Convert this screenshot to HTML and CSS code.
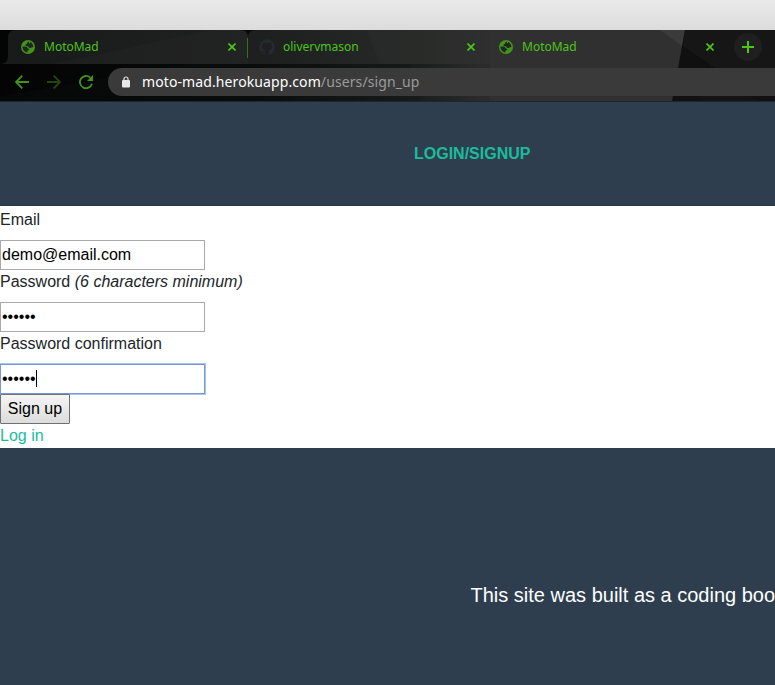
FILE: index.html
```html
<!DOCTYPE html>
<html lang="en">
<head>
<meta charset="utf-8">
<title>MotoMad</title>
<link rel="stylesheet" href="styles.css">
</head>
<body>
<svg class="defs" width="0" height="0" aria-hidden="true">
  <symbol id="globe" viewBox="0 0 14 14">
    <circle cx="7" cy="7" r="7" fill="#40951b"/>
    <path d="M8.3 1.6C7 1.9 6.2 2.4 6 3.4c-.1.8-1.6.5-1.6 1.6 0 .9.9 1.2 2 1.2 1.3 0 1.2 1.9 2.7 1.9 1.3 0 1.4-1.2 3.3-1.1C12.4 4.8 11 2.6 9.2 1.9c.2.9-.4 1.4-1.4 1.6z" fill="#222621"/>
    <path d="M1.5 6.5c1.6-.1 3.9-.2 4.6.8.5.7.4 1.3 1.5 1.4 1 .1 1 1.5-.2 1.6-1 .1-1 .6-1 2.1C3.700 12.200 1.300 9.800 1.500 6.500z" fill="#222621"/>
  </symbol>
  <symbol id="close" viewBox="0 0 8 8"><path d="M.5.5l7 7m0-7l-7 7" stroke="#4bc516" stroke-width="1.7"/></symbol>
</svg>
<header class="browser">
  <div class="titlebar"></div>
  <div class="chrome">
    <svg class="texture" width="775" height="71" viewBox="0 0 775 71" aria-hidden="true">
      <defs>
        <linearGradient id="base"><stop offset="0" stop-color="#030403"/><stop offset=".32" stop-color="#080a09"/><stop offset=".53" stop-color="#191c1b"/><stop offset=".62" stop-color="#2a2b2a"/><stop offset=".88" stop-color="#303030"/></linearGradient>
        <linearGradient id="tabs"><stop offset="0" stop-color="#181919"/><stop offset="1" stop-color="#202121"/></linearGradient>
        <linearGradient id="second"><stop offset="0" stop-color="#1d1f1e"/><stop offset=".55" stop-color="#252726"/><stop offset="1" stop-color="#2e2e2e"/></linearGradient>
      </defs>
      <path fill="url(#base)" d="M0 0h775v71H0z"/>
      <path fill="#111312" d="M0 66 210 30 300 0h100l20 71H0z" opacity=".25"/>
      <path fill="url(#tabs)" d="M0 34q8 0 8-8V8q0-8 8-8h224q8 0 8 8v26z"/>
      <path fill="#2b2d2c" opacity=".2" d="M100 24 210 0h30q8 0 8 8v26H50z"/>
      <path fill="url(#second)" d="M248 34V8q0-8 8-8h234v34z"/>
      <path fill="#303130" opacity=".3" d="M367 0h123v34H380z"/>
      <path fill="#303030" d="M490 0h195l-13 71H490z"/>
      <path fill="#3b3b3b" d="M660 0h25l-3 16z"/>
      <path fill="#101010" d="M685 0h90v71H672z"/>
      <path fill="#1b1b1b" d="m683 16 32 22h60V0h-90z" opacity=".5"/>
      <path fill="#1b1b1b" d="M700 66h50l10 5h-60z" opacity=".3"/>
    </svg>
    <div class="tabs">
      <div class="tab">
        <svg class="favicon"><use href="#globe"/></svg><span>MotoMad</span>
        <svg class="close"><use href="#close"/></svg>
      </div>
      <div class="tab second">
        <svg class="cat" viewBox="0 0 16 16"><path fill="#262b31" d="M8 .2a8 8 0 0 0-2.500 15.500c.4.1.6-.2.6-.4v-1.400c-2.300.5-2.800-1-2.800-1-.4-.9-.9-1.200-.9-1.200-.7-.5.1-.5.1-.5.8.1 1.200.8 1.200.8.7 1.300 1.900.9 2.400.7.1-.5.3-.9.5-1.100-1.800-.2-3.700-.9-3.700-4 0-.9.3-1.600.8-2.100-.1-.2-.4-1 .1-2.100 0 0 .7-.2 2.200.8a7.500 7.500 0 0 1 4 0c1.500-1 2.200-.8 2.200-.8.5 1.100.2 1.900.1 2.100.5.5.8 1.200.8 2.100 0 3.100-1.900 3.800-3.700 4 .3.2.6.7.6 1.500v2.200c0 .2.1.5.6.4A8 8 0 0 0 8 .2z"/></svg><span>olivervmason</span>
        <svg class="close"><use href="#close"/></svg>
      </div>
      <div class="tab">
        <svg class="favicon"><use href="#globe"/></svg><span>MotoMad</span>
        <svg class="close"><use href="#close"/></svg>
      </div>
      <div class="new-tab"><svg width="12" height="12" viewBox="0 0 12 12"><path d="M6 0v12M0 6h12" stroke="#4bc516" stroke-width="2"/></svg></div>
    </div>
    <div class="toolbar">
      <svg class="back" width="14" height="14" viewBox="0 0 14 14"><path d="M14 7H1.3M7.3.7 1 7l6.300 6.300" fill="none" stroke="#40951b" stroke-width="1.8"/></svg>
      <svg class="forward" width="14" height="14" viewBox="0 0 14 14"><path d="M0 7h12.700M6.700.7 13 7l-6.300 6.300" fill="none" stroke="#234611" stroke-width="1.8"/></svg>
      <svg class="reload" width="14" height="14" viewBox="0 0 14 14"><path d="M11.300 2.700A6.100 6.100 0 1 0 12.900 8.800" fill="none" stroke="#40951b" stroke-width="1.8"/><path d="M14 0v6H8z" fill="#40951b"/></svg>
      <div class="address">
        <svg width="8" height="12" viewBox="0 0 8 12"><path d="M2 5V3a2 2 0 0 1 4 0v2" fill="none" stroke="#e8e8e8" stroke-width="1.2"/><rect y="4" width="8" height="7.5" rx="1" fill="#e8e8e8"/></svg>
        <span class="url">moto-mad.herokuapp.com<span>/users/sign_up</span></span>
      </div>
    </div>
  </div>
</header>
<nav class="nav"><a>LOGIN/SIGNUP</a></nav>
<form class="signup">
  <label for="email">Email</label>
  <input id="email" type="email" value="demo@email.com">
  <label for="password">Password <em>(6 characters minimum)</em></label>
  <input id="password" type="password" value="123456">
  <label for="confirm">Password confirmation</label>
  <div class="field focused"><input id="confirm" type="password" value="123456"><i class="caret"></i></div>
  <button type="button">Sign up</button>
  <a class="login">Log in</a>
</form>
<footer class="footer"><p>This site was built as a coding boo</p></footer>
</body>
</html>
```
FILE: styles.css
```css
* { box-sizing: border-box; }
body {
  margin: 0;
  height: 685px;
  overflow: hidden;
  display: flex;
  flex-direction: column;
  font: 16px/24px "Liberation Sans", Arial, sans-serif;
  color: #212529;
  background: #fff;
}
.defs { position: absolute; }
.browser, .nav, .signup { flex: none; }
.titlebar { height: 30px; background: linear-gradient(#eaeaea, #dcdcdc); }
.chrome { position: relative; height: 71px; font-family: "Noto Sans", sans-serif; }
.texture { position: absolute; inset: 0; }
.tabs, .toolbar { position: relative; display: flex; align-items: center; }
.tabs { height: 34px; padding-left: 8px; }
.tab {
  width: 239px;
  height: 34px;
  flex: none;
  display: flex;
  align-items: center;
  padding: 0 11px 0 13px;
  font-size: 12px;
  line-height: 18px;
  color: #4bc516;
}
.tab span { flex: 1; padding-bottom: 1px; }
.favicon { width: 14px; height: 14px; margin-right: 9px; }
.second { background: linear-gradient(#347015, #347015) 0 8px / 1px 20px no-repeat; padding-left: 12px; }
.cat { width: 16px; height: 16px; margin-right: 8px; }
.close { width: 8px; height: 8px; }
.new-tab {
  width: 28px;
  height: 28px;
  margin-left: 9px;
  display: flex;
  align-items: center;
  justify-content: center;
  border-radius: 50%;
  background: #1f1f1f;
}
.toolbar { height: 36px; padding-left: 15px; }
.forward { margin-left: 18px; }
.reload { margin-left: 18px; }
.address {
  flex: 1;
  height: 28px;
  margin-left: 15px;
  padding-left: 14px;
  display: flex;
  align-items: center;
  gap: 12px;
  border-radius: 14px 0 0 14px;
  background: #3a3a3a;
}
.url { font-size: 14px; line-height: 20px; letter-spacing: .1px; color: #fff; }
.url span { color: #9b9b9b; }
.nav {
  height: 105px;
  padding: 40px 0 0 414px;
  background: #2e3e4f;
  border-top: 1px solid #1c2630;
  border-bottom: 1px solid #2b364a;
  color: #1abc9c;
  font-weight: 700;
}
.signup {
  height: 242px;
  padding-top: 2px;
  display: flex;
  flex-direction: column;
  align-items: flex-start;
}
label { height: 32px; line-height: 24px; }
input {
  display: block;
  width: 205px;
  height: 30px;
  margin: 0;
  padding: 1px;
  border: 1px solid #a9a9a9;
  border-radius: 0;
  background: #fff;
  color: #000;
  font: 16px/24px "Liberation Sans", Arial, sans-serif;
  outline: none;
}
.field { position: relative; }
.focused input { border-color: #7598d8; box-shadow: 0 0 0 1px #a9c4f1; }
.caret { position: absolute; left: 36px; top: 6px; width: 1px; height: 17px; background: #000; }
button {
  position: relative;
  width: 70px;
  height: 30px;
  margin: 0;
  padding: 0;
  border: 1px solid #707070;
  border-radius: 1px;
  background: linear-gradient(#f5f5f5, #dcdcdc);
  color: #000;
  font: 16px/24px "Liberation Sans", Arial, sans-serif;
}
.login { color: #1abc9c; }
.footer { flex: 1; background: #2e3e4f; padding: 132px 0 0 470.5px; color: #fff; }
.footer p { margin: 0; font-size: 20px; line-height: 30px; white-space: nowrap; }
```
